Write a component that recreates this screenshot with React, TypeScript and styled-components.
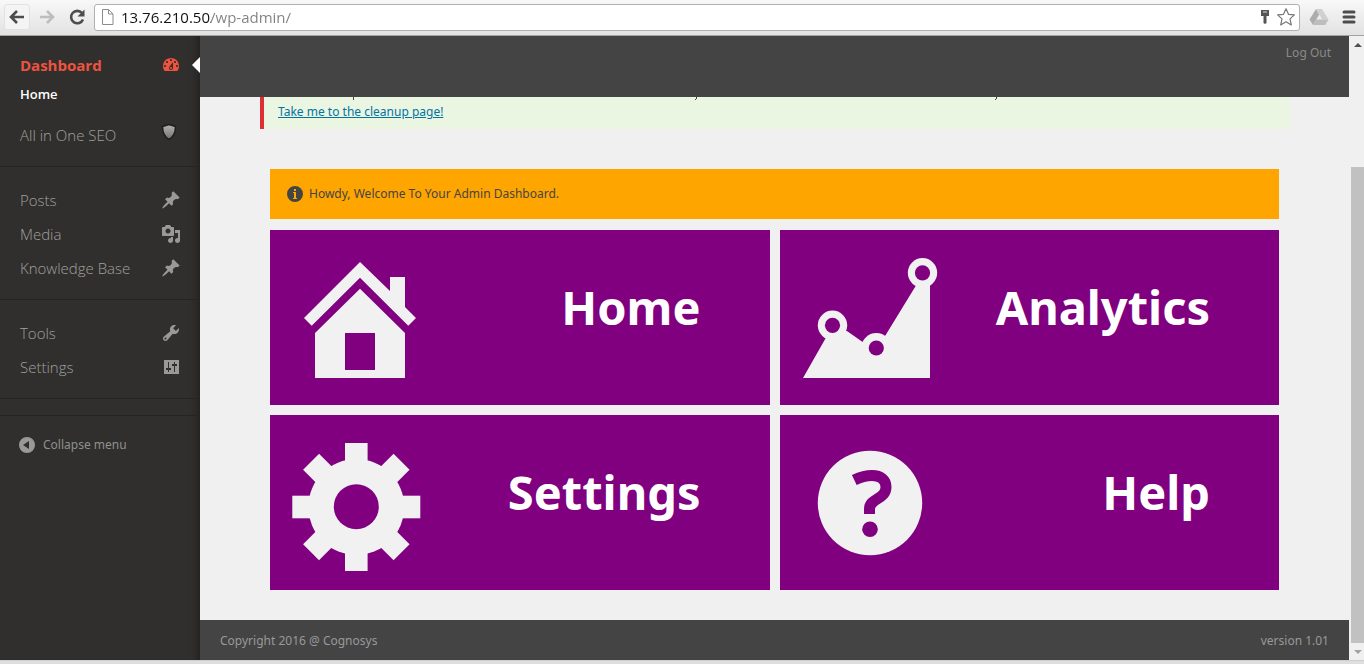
import React from "react";
import styled, { createGlobalStyle } from "styled-components";

const Global = createGlobalStyle`
  *, *::before, *::after { box-sizing: border-box; }
  body { margin: 0; font-family: "Noto Sans", "Open Sans", sans-serif; font-size: 12px; line-height: 20px; color: #444; background: #f0f0f0; }
  button, input { font: inherit; }
  svg { display: block; flex: none; }
`;

const Window = styled.div`
  display: flex;
  flex-direction: column;
  min-height: 100vh;
`;

/* ---------- browser toolbar ---------- */

const Toolbar = styled.div`
  display: flex;
  align-items: center;
  gap: 4px;
  height: 36px;
  padding: 0 2px 1px 4px;
  background: linear-gradient(#f8f8f8, #e2e2e2);
  border-bottom: 1px solid #a3a3a3;
`;

const ToolButton = styled.button<{ $raised?: boolean }>`
  display: flex;
  align-items: center;
  justify-content: center;
  width: 26px;
  height: 26px;
  padding: 0;
  border: 1px solid ${(p) => (p.$raised ? "#e2e2e2" : "transparent")};
  border-radius: 3px;
  background: ${(p) => (p.$raised ? "#f4f4f4" : "transparent")};
`;

const AddressBar = styled.div`
  flex: 1;
  display: flex;
  align-items: center;
  gap: 7px;
  height: 27px;
  margin-right: 2px;
  padding: 0 4px 0 6px;
  background: #fff;
  border: 1px solid #b0b0b0;
  border-radius: 3px;
`;

const AddressInput = styled.input`
  flex: 1;
  min-width: 0;
  height: 24px;
  padding: 0;
  border: 0;
  outline: 0;
  font-family: "Open Sans", "Noto Sans", sans-serif;
  font-size: 15px;
  color: transparent;
  background: linear-gradient(to right, #111 90px, #808080 90px);
  -webkit-background-clip: text;
  background-clip: text;
`;

/* ---------- page frame ---------- */

const Viewport = styled.div`
  flex: 1;
  display: flex;
`;

const Sidebar = styled.nav`
  position: relative;
  width: 200px;
  padding-top: 12px;
  background: #302f2d;
  box-shadow: inset -10px 0 8px -8px rgba(0, 0, 0, 0.35);
`;

const Group = styled.div`
  padding-bottom: 14px;
  margin-bottom: 16px;
  border-bottom: 1px solid #252422;
`;

const Rule = styled.div`
  height: 1px;
  margin-bottom: 12px;
  background: #252422;
`;

const MenuLink = styled.a<{ $active?: boolean }>`
  position: relative;
  display: flex;
  align-items: center;
  justify-content: space-between;
  height: 34px;
  padding: 0 19px 0 20px;
  font-family: "Open Sans", "Noto Sans", sans-serif;
  font-size: 15px;
  font-weight: ${(p) => (p.$active ? 700 : 300)};
  color: ${(p) => (p.$active ? "#ee5340" : "#a0a09f")};
  text-decoration: none;
`;

const CurrentArrow = styled.span`
  position: absolute;
  right: 0;
  top: 9px;
  border: 8px solid transparent;
  border-right-color: #fff;
  border-left-width: 0;
`;

const SubLink = styled.a`
  display: block;
  height: 36px;
  padding: 2px 20px;
  font-family: "Open Sans", "Noto Sans", sans-serif;
  font-size: 13px;
  font-weight: 600;
  color: #fff;
  text-decoration: none;
`;

const CollapseButton = styled.button`
  display: flex;
  align-items: center;
  gap: 6px;
  height: 34px;
  padding: 0 17px;
  border: 0;
  background: none;
  font-size: 12px;
  color: #8f8f8e;
`;

const Page = styled.div`
  flex: 1;
  display: flex;
  flex-direction: column;
  min-width: 0;
`;

const TopBar = styled.header`
  display: flex;
  justify-content: flex-end;
  height: 61px;
  padding: 7px 18px;
  background: #444;
`;

const LogOut = styled.a`
  color: #8a8a8a;
  text-decoration: none;
`;

const Notice = styled.div`
  height: 32px;
  margin: 0 59px 0 60px;
  border-left: 4px solid #dd3034;
  background: #eaf6e2;
`;

const NoticeLink = styled.a`
  display: block;
  width: max-content;
  margin-left: 14px;
  padding-top: 1px;
  color: #0274a2;
`;

const Main = styled.main`
  flex: 1;
  display: flex;
  flex-direction: column;
  gap: 11px;
  padding: 40px 70px 30px;
`;

const Welcome = styled.div`
  display: flex;
  align-items: center;
  gap: 4px;
  height: 50px;
  padding: 0 15px;
  background: #ffa500;
`;

const Tiles = styled.div`
  display: grid;
  grid-template-columns: 1fr 1fr;
  gap: 10px;
`;

const Tile = styled.a`
  display: flex;
  justify-content: space-between;
  height: 175px;
  padding: 13px 69px 0 15px;
  background: #800080;
  color: #fff;
  text-decoration: none;
`;

const TileTitle = styled.span`
  padding-top: 32px;
  font-size: 47px;
  font-weight: 700;
  line-height: 64px;
`;

const Footer = styled.footer`
  display: flex;
  align-items: center;
  justify-content: space-between;
  height: 40px;
  padding: 2px 20px 0;
  background: #444;
  color: #999;
`;

const ScrollBar = styled.div`
  display: flex;
  flex-direction: column;
  width: 15px;
  padding-left: 2px;
  background: #f0f0f0;
`;

const ScrollArrow = styled.button`
  display: flex;
  align-items: center;
  justify-content: center;
  height: 17px;
  padding: 0;
  border: 0;
  background: none;
`;

const ScrollGap = styled.div`
  flex: 114;
`;

const ScrollThumb = styled.div`
  flex: 476;
  background: #c1c1c1;
`;

const WindowEdge = styled.div`
  height: 4px;
  background: #dedede;
  border-top: 1px solid #cfcfcf;
`;

/* ---------- drawings ---------- */

const paths = {
  dashboard:
    "M3.76 16h12.48c1.1-1.37 1.76-3.11 1.76-5 0-4.42-3.58-8-8-8s-8 3.58-8 8c0 1.89.66 3.63 1.76 5zM10 4c.55 0 1 .45 1 1s-.45 1-1 1-1-.45-1-1 .45-1 1-1zM6 6c.55 0 1 .45 1 1s-.45 1-1 1-1-.45-1-1 .45-1 1-1zm8 0c.55 0 1 .45 1 1s-.45 1-1 1-1-.45-1-1 .45-1 1-1zm-5.37 5.55L12 7v6c0 1.1-.9 2-2 2s-2-.9-2-2c0-.57.24-1.08.63-1.45zM4 10c.55 0 1 .45 1 1s-.45 1-1 1-1-.45-1-1 .45-1 1-1zm12 0c.55 0 1 .45 1 1s-.45 1-1 1-1-.45-1-1 .45-1 1-1zm-5 3c0-.55-.45-1-1-1s-1 .45-1 1 .45 1 1 1 1-.45 1-1z",
  pin: "M10.44 3.02l1.82-1.82 6.36 6.35-1.83 1.82c-1.05-.68-2.48-.57-3.41.36l-.75.75c-.92.93-1.04 2.35-.35 3.41l-1.83 1.82-2.41-2.41-2.8 2.79c-.42.42-3.38 2.71-3.8 2.29s1.86-3.39 2.28-3.81l2.79-2.79L4.1 9.36l1.83-1.82c1.05.69 2.48.57 3.4-.36l.75-.75c.93-.92 1.05-2.35.36-3.41z",
  media:
    "M13 11V4c0-.55-.45-1-1-1h-1.67L9 1H5L3.67 3H2c-.55 0-1 .45-1 1v7c0 .55.45 1 1 1h10c.55 0 1-.45 1-1zM7 4.5c1.38 0 2.5 1.12 2.5 2.5S8.38 9.5 7 9.5 4.5 8.38 4.5 7 5.62 4.5 7 4.5zM14 6h5v10.5c0 1.38-1.12 2.5-2.5 2.5S14 17.88 14 16.5s1.12-2.5 2.5-2.5c.17 0 .34.02.5.05V9h-3V6zm-4 8.05V13h2v3.5c0 1.38-1.12 2.5-2.5 2.5S7 17.88 7 16.5 8.12 14 9.5 14c.17 0 .34.02.5.05z",
  tools:
    "M16.68 9.77c-1.34 1.34-3.3 1.67-4.95.99l-5.41 6.52c-.99.99-2.59.99-3.58 0s-.99-2.59 0-3.57l6.52-5.42c-.68-1.65-.35-3.61.99-4.95 1.28-1.28 3.12-1.62 4.72-1.06l-2.89 2.89 2.82 2.82 2.86-2.87c.53 1.58.18 3.39-1.08 4.65zM3.81 16.21c.4.39 1.04.39 1.43 0 .4-.4.4-1.04 0-1.43-.39-.4-1.03-.4-1.43 0-.39.39-.39 1.03 0 1.43z",
  settings:
    "M18 17V3H3v14zM8 11h2v2H8v2H7v-2H5v-2h2V5h1zm5-2h-2V7h2V5h1v2h2v2h-2v6h-1z",
  collapse: "M10 2a8 8 0 1 0 0 16a8 8 0 1 0 0-16zM12 6v8l-6-4z",
  info: "M10 2a8 8 0 1 0 0 16a8 8 0 1 0 0-16zM9 5h2v2H9zM8 8h3v6h1v1H8v-1h1V9H8z",
};

const Glyph = ({ name, fill }: { name: keyof typeof paths; fill: string }) => (
  <svg width="20" height="20" viewBox="0 0 20 20" aria-hidden="true">
    <path d={paths[name]} fill={fill} fillRule="evenodd" />
  </svg>
);

const Shield = () => (
  <svg width="20" height="28" viewBox="0 0 20 28" aria-hidden="true">
    <defs>
      <linearGradient id="shield" x1="0" y1="0" x2="0" y2="1">
        <stop offset="0" stopColor="#b5b5b5" />
        <stop offset="1" stopColor="#707070" />
      </linearGradient>
    </defs>
    <path
      d="M8 3.5L14.5 5.5C14.5 11 13 15.500 8 18.500C3 15.500 1.500 11 1.500 5.500Z"
      fill="url(#shield)"
      stroke="#1e1e1d"
      strokeWidth="1.500"
      strokeLinejoin="round"
    />
  </svg>
);

const tileFill = "#f1f1f1";

const HomeArt = () => (
  <svg width="150" height="150" viewBox="0 0 150 150" fill={tileFill} aria-hidden="true">
    <path d="M75 19L105 48V34H120V64L131 75L123.300 82.700L75 34.700L26.700 82.700L19 75Z" />
    <path fillRule="evenodd" d="M75 45.700L120 90V135H30V90ZM60 90V127H90V90Z" />
  </svg>
);

const AnalyticsArt = () => (
  <svg width="150" height="150" viewBox="0 0 150 150" fill={tileFill} aria-hidden="true">
    <path d="M8 135H135V40H122.500L90.700 92L81 105L67.300 98.700L52.300 88.300L37 84Z" />
    <circle cx="127.500" cy="29.800" r="14.700" />
    <circle cx="37.500" cy="82.300" r="14.700" />
    <circle cx="81.300" cy="105" r="15" />
    <g fill="#800080">
      <circle cx="127.500" cy="29.800" r="7.600" />
      <circle cx="37.500" cy="82.300" r="7.600" />
      <circle cx="81.300" cy="105" r="7.600" />
    </g>
  </svg>
);

const SettingsArt = () => (
  <svg width="150" height="150" viewBox="0 0 150 150" fill={tileFill} aria-hidden="true">
    <circle cx="71.300" cy="79" r="48" />
    {[0, 45, 90, 135].map((angle) => (
      <rect key={angle} x="60" y="15" width="22.600" height="128" transform={`rotate(${angle} 71.300 79)`} />
    ))}
    <circle cx="71.300" cy="78.700" r="22.500" fill="#800080" />
  </svg>
);

const HelpArt = () => (
  <svg width="150" height="150" viewBox="0 0 150 150" aria-hidden="true">
    <circle cx="75" cy="75" r="52.200" fill={tileFill} />
    <path
      d="M59.300 52C66 48.800 71 47.500 77 47.500C86 47.500 91 52 91 59C91 71.500 74.500 70 74.500 81V86"
      fill="none"
      stroke="#800080"
      strokeWidth="11"
    />
    <circle cx="75" cy="101.300" r="7.800" fill="#800080" />
  </svg>
);

const tiles = [
  { title: "Home", Art: HomeArt },
  { title: "Analytics", Art: AnalyticsArt },
  { title: "Settings", Art: SettingsArt },
  { title: "Help", Art: HelpArt },
];

const MenuItem = ({ label, icon }: { label: string; icon: keyof typeof paths }) => (
  <MenuLink href="#">
    {label}
    <Glyph name={icon} fill="#999998" />
  </MenuLink>
);

const BrowserToolbar = () => (
  <Toolbar>
    <ToolButton $raised aria-label="Back">
      <svg width="18" height="16" viewBox="0 0 18 16" fill="none" stroke="#4c4c4c" strokeWidth="2.600">
        <path d="M9 2L3 8L9 14M3 8H16" />
      </svg>
    </ToolButton>
    <ToolButton aria-label="Forward">
      <svg width="18" height="16" viewBox="0 0 18 16" fill="none" stroke="#bdbdbd" strokeWidth="2.600">
        <path d="M9 2L15 8L9 14M15 8H2" />
      </svg>
    </ToolButton>
    <ToolButton aria-label="Reload">
      <svg width="18" height="18" viewBox="0 0 18 18">
        <path d="M14 5A6.200 6.200 0 1 0 15 11.500" fill="none" stroke="#4c4c4c" strokeWidth="2.600" />
        <path d="M16.500 1.500V8.500H9.500Z" fill="#4c4c4c" />
      </svg>
    </ToolButton>
    <AddressBar>
      <svg width="13" height="16" viewBox="0 0 13 16" fill="#fff" stroke="#8c8c8c">
        <path d="M1.500 .5H7.500L12 5V15.500H1.500ZM7.500 .5V5H12" />
      </svg>
      <AddressInput aria-label="Address" defaultValue="13.76.210.50/wp-admin/" />
      <svg width="10" height="16" viewBox="0 0 10 16">
        <path d="M1 1H9V7H6.500V14L5 15L3.500 14V7H1Z" fill="#555" />
        <path d="M3 3H7" stroke="#ddd" />
      </svg>
      <svg width="18" height="18" viewBox="0 0 18 18" fill="#fff" stroke="#777" strokeWidth="1.200" strokeLinejoin="round">
        <path d="M9 .8L11.500 6.300L17.400 6.900L13 10.900L14.300 16.900L9 13.800L3.700 16.900L5 10.900L.6 6.900L6.500 6.300Z" />
      </svg>
    </AddressBar>
    <ToolButton aria-label="Drive">
      <svg width="20" height="18" viewBox="0 0 20 18">
        <path d="M7 1L10.200 6.500L4 17L.5 11.500Z" fill="#adadad" />
        <path d="M7 1H13L19.500 11.500H13.200Z" fill="#d0d0d0" />
        <path d="M7 11.500H19.500L16.300 17H4Z" fill="#bdbdbd" />
      </svg>
    </ToolButton>
    <ToolButton aria-label="Menu">
      <svg width="14" height="14" viewBox="0 0 14 14" stroke="#4c4c4c" strokeWidth="3" strokeLinecap="round">
        <path d="M2 2H12M2 7H12M2 12H12" />
      </svg>
    </ToolButton>
  </Toolbar>
);

export default function App() {
  return (
    <Window>
      <Global />
      <BrowserToolbar />
      <Viewport>
        <Sidebar>
          <Group>
            <MenuLink href="#" $active>
              Dashboard
              <Glyph name="dashboard" fill="#ee5340" />
              <CurrentArrow />
            </MenuLink>
            <SubLink href="#">Home</SubLink>
            <MenuLink href="#">
              All in One SEO
              <Shield />
            </MenuLink>
          </Group>
          <Group>
            <MenuItem label="Posts" icon="pin" />
            <MenuItem label="Media" icon="media" />
            <MenuItem label="Knowledge Base" icon="pin" />
          </Group>
          <Group>
            <MenuItem label="Tools" icon="tools" />
            <MenuItem label="Settings" icon="settings" />
          </Group>
          <Rule />
          <CollapseButton>
            <Glyph name="collapse" fill="#999998" />
            Collapse menu
          </CollapseButton>
        </Sidebar>
        <Page>
          <TopBar>
            <LogOut href="#">Log Out</LogOut>
          </TopBar>
          <Notice>
            <svg width="750" height="4" viewBox="0 0 750 4" fill="#444" aria-hidden="true">
              <path d="M89 0h1v3h-1zM432 0h1v2h-1zM431 2h1v1h-1zM732 0h1v2h-1zM731 2h1v1h-1z" />
            </svg>
            <NoticeLink href="#">Take me to the cleanup page!</NoticeLink>
          </Notice>
          <Main>
            <Welcome>
              <Glyph name="info" fill="#444" />
              Howdy, Welcome To Your Admin Dashboard.
            </Welcome>
            <Tiles>
              {tiles.map(({ title, Art }) => (
                <Tile href="#" key={title}>
                  <Art />
                  <TileTitle>{title}</TileTitle>
                </Tile>
              ))}
            </Tiles>
          </Main>
          <Footer>
            <span>Copyright 2016 @ Cognosys</span>
            <span>version 1.01</span>
          </Footer>
        </Page>
        <ScrollBar>
          <ScrollArrow aria-label="Scroll up">
            <svg width="8" height="4" viewBox="0 0 8 4">
              <path d="M4 0L8 4H0Z" fill="#505050" />
            </svg>
          </ScrollArrow>
          <ScrollGap />
          <ScrollThumb />
          <ScrollArrow aria-label="Scroll down">
            <svg width="8" height="4" viewBox="0 0 8 4">
              <path d="M0 0H8L4 4Z" fill="#a3a3a3" />
            </svg>
          </ScrollArrow>
        </ScrollBar>
      </Viewport>
      <WindowEdge />
    </Window>
  );
}
